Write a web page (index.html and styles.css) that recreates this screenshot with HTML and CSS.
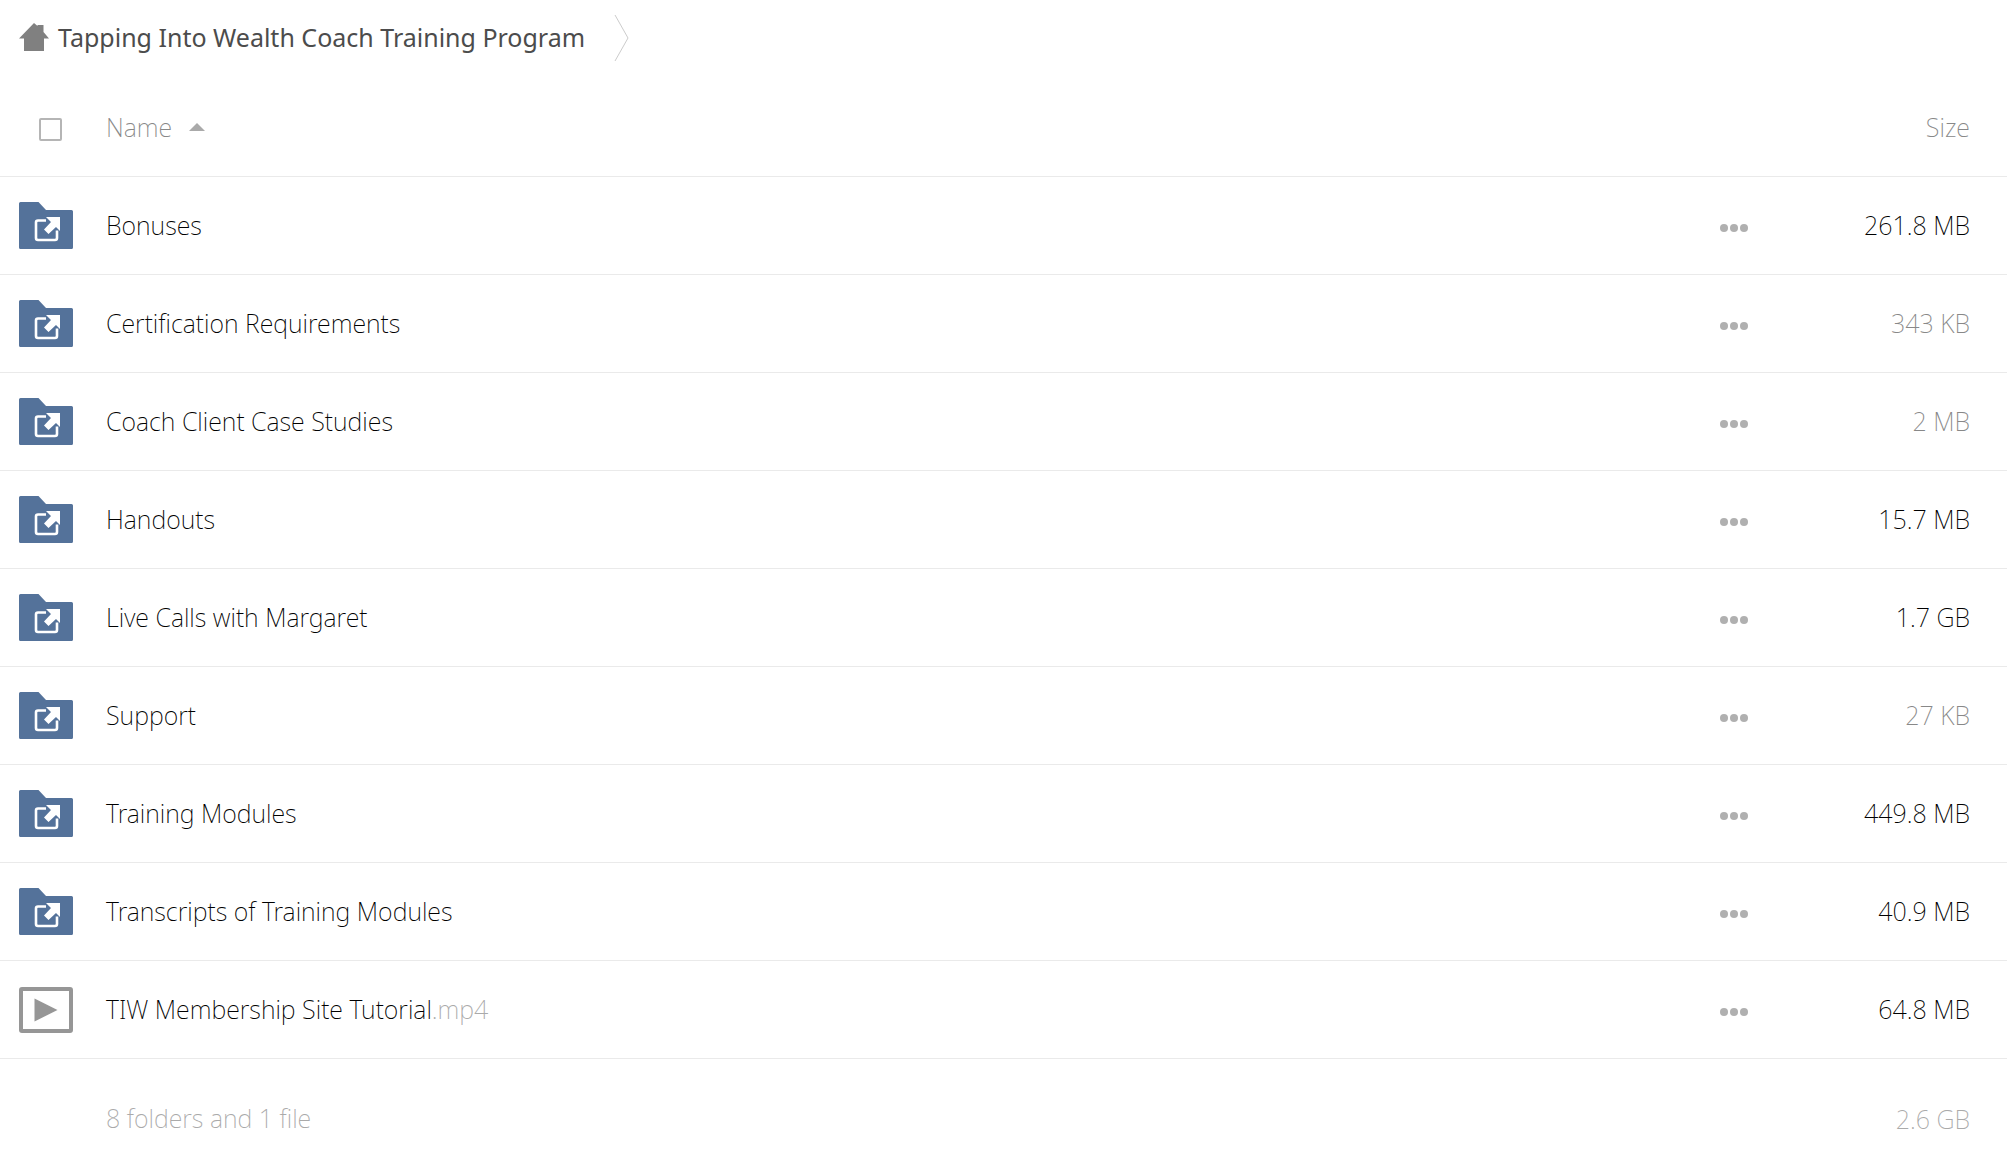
FILE: index.html
```html
<!DOCTYPE html>
<html lang="en">
<head>
<meta charset="utf-8">
<title>Files</title>
<meta name="viewport" content="width=device-width, initial-scale=1">
<link rel="stylesheet" href="styles.css">
</head>
<body>
<svg class="sprite" aria-hidden="true">
  <symbol id="folder" viewBox="0 0 54 48">
    <path fill="#54729a" d="M1.500 0H19.500L27 8H52.500Q54 8 54 9.500V45.500Q54 47 52.500 47H1.500Q0 47 0 45.500V1.500Q0 0 1.500 0Z"/>
    <path fill="none" stroke="#fff" stroke-width="2.600" d="M27 18.500H19Q17 18.500 17 20.500V36Q17 38 19 38H36Q38 38 38 36V28.500"/>
    <path fill="#fff" d="M27 15H41V29L37 25L29.500 32L25 27.500L32 20Z"/>
  </symbol>
  <symbol id="video" viewBox="0 0 54 48">
    <rect x="2" y="3" width="50" height="42" rx="1" fill="none" stroke="#969696" stroke-width="4"/>
    <path fill="#969696" d="M15.500 12.500L38.500 24L15.500 35.500Z"/>
  </symbol>
  <symbol id="dots" viewBox="0 0 28 8">
    <circle cx="4" cy="4" r="4"/><circle cx="14" cy="4" r="4"/><circle cx="24" cy="4" r="4"/>
  </symbol>
</svg>

<nav class="breadcrumb" aria-label="Breadcrumb">
  <a class="crumb" href="#">
    <svg class="home" viewBox="0 0 30 28" aria-hidden="true"><path fill="#808080" d="M15 0L18.500 3V2H24.500V9L30 15.500H25V28H5V15.500H0Z"/></svg>
    <span>Tapping Into Wealth Coach Training Program</span>
  </a>
  <svg class="separator" viewBox="0 0 16 48" aria-hidden="true"><path fill="none" stroke="#ccc" d="M1 1L14 24L1 47"/></svg>
</nav>

<table class="files">
  <thead>
    <tr>
      <th class="pick"><input class="check" type="checkbox" aria-label="Select all"></th>
      <th class="name"><button class="sort" type="button">Name <svg class="arrow" viewBox="0 0 16 8" aria-hidden="true"><path fill="#aaa" d="M0 8L8 0L16 8Z"/></svg></button></th>
      <th class="more"></th>
      <th class="size"><button class="sort" type="button">Size</button></th>
    </tr>
  </thead>
  <tbody>
    <tr><td class="pick"><svg class="icon"><use href="#folder"/></svg></td><td class="name"><a href="#">Bonuses</a></td><td class="more"><button class="menu" type="button" aria-label="More"><svg class="dots"><use href="#dots"/></svg></button></td><td class="size">261.8 MB</td></tr>
    <tr><td class="pick"><svg class="icon"><use href="#folder"/></svg></td><td class="name"><a href="#">Certification Requirements</a></td><td class="more"><button class="menu" type="button" aria-label="More"><svg class="dots"><use href="#dots"/></svg></button></td><td class="size small">343 KB</td></tr>
    <tr><td class="pick"><svg class="icon"><use href="#folder"/></svg></td><td class="name"><a href="#">Coach Client Case Studies</a></td><td class="more"><button class="menu" type="button" aria-label="More"><svg class="dots"><use href="#dots"/></svg></button></td><td class="size small">2 MB</td></tr>
    <tr><td class="pick"><svg class="icon"><use href="#folder"/></svg></td><td class="name"><a href="#">Handouts</a></td><td class="more"><button class="menu" type="button" aria-label="More"><svg class="dots"><use href="#dots"/></svg></button></td><td class="size">15.7 MB</td></tr>
    <tr><td class="pick"><svg class="icon"><use href="#folder"/></svg></td><td class="name"><a href="#">Live Calls with Margaret</a></td><td class="more"><button class="menu" type="button" aria-label="More"><svg class="dots"><use href="#dots"/></svg></button></td><td class="size">1.7 GB</td></tr>
    <tr><td class="pick"><svg class="icon"><use href="#folder"/></svg></td><td class="name"><a href="#">Support</a></td><td class="more"><button class="menu" type="button" aria-label="More"><svg class="dots"><use href="#dots"/></svg></button></td><td class="size small">27 KB</td></tr>
    <tr><td class="pick"><svg class="icon"><use href="#folder"/></svg></td><td class="name"><a href="#">Training Modules</a></td><td class="more"><button class="menu" type="button" aria-label="More"><svg class="dots"><use href="#dots"/></svg></button></td><td class="size">449.8 MB</td></tr>
    <tr><td class="pick"><svg class="icon"><use href="#folder"/></svg></td><td class="name"><a href="#">Transcripts of Training Modules</a></td><td class="more"><button class="menu" type="button" aria-label="More"><svg class="dots"><use href="#dots"/></svg></button></td><td class="size">40.9 MB</td></tr>
    <tr><td class="pick"><svg class="icon"><use href="#video"/></svg></td><td class="name"><a href="#">TIW Membership Site Tutorial<span class="ext">.mp4</span></a></td><td class="more"><button class="menu" type="button" aria-label="More"><svg class="dots"><use href="#dots"/></svg></button></td><td class="size">64.8 MB</td></tr>
  </tbody>
  <tfoot>
    <tr><td class="pick"></td><td class="name">8 folders and 1 file</td><td class="more"></td><td class="size">2.6 GB</td></tr>
  </tfoot>
</table>
</body>
</html>
```
FILE: styles.css
```css
* { box-sizing: border-box; }

body {
  margin: 0;
  background: #fff;
  color: #000;
  font: 200 25px/36px "Noto Sans", "Open Sans", sans-serif;
}

a { color: inherit; text-decoration: none; }

button {
  padding: 0;
  border: 0;
  background: none;
  color: inherit;
  font: inherit;
  cursor: pointer;
}

svg { display: block; }

.sprite { position: absolute; width: 0; height: 0; }

.breadcrumb {
  display: flex;
  align-items: center;
  gap: 29px;
  height: 76px;
  padding-left: 19px;
}

.crumb {
  display: flex;
  align-items: center;
  gap: 9px;
  padding-bottom: 2px;
  color: #4c4c4c;
  font-weight: 450;
}

.home { width: 30px; height: 28px; }
.separator { width: 16px; height: 48px; }

.files {
  width: 100%;
  border-collapse: separate;
  border-spacing: 0;
  table-layout: fixed;
}

th, td {
  height: 98px;
  padding: 0;
  border-bottom: 1px solid #eaeaea;
  font-weight: 200;
  text-align: left;
  vertical-align: middle;
}

td.name { padding-bottom: 2px; }
td.size { padding-bottom: 1px; }

th {
  height: 101px;
  padding-top: 2px;
  color: #888;
}

.pick { width: 106px; padding-left: 19px; }
th.pick { padding-left: 39px; }
.more { width: 133px; }
.size { width: 154px; padding-right: 37px; text-align: right; }
td.small { color: #888; }
.ext { color: #aaa; }

.check {
  display: block;
  appearance: none;
  width: 23px;
  height: 23px;
  margin: 4px 0 0;
  border: 2px solid #b5b5b5;
  border-radius: 2px;
}

.sort { display: inline-flex; align-items: center; gap: 17px; }
.arrow { width: 16px; height: 8px; }

.icon { width: 54px; height: 48px; }

.menu { display: flex; align-items: center; height: 36px; padding-top: 4px; }
.dots { width: 28px; height: 8px; fill: #b0b0b0; }

tfoot td {
  height: 120px;
  border: 0;
  color: #aaa;
}
```
